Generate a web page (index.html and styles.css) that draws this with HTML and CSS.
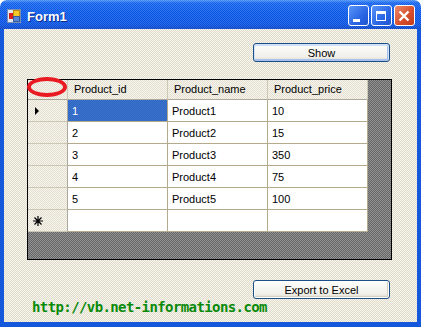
FILE: index.html
```html
<!DOCTYPE html>
<html lang="en">
  <head>
    <meta charset="UTF-8" />
    <title>Form1</title>
    <link rel="stylesheet" href="styles.css">
  </head>
  <body>
    <div class="window">
      <div class="titlebar">
        <svg class="app-icon" width="14" height="14" viewBox="0 0 14 14">
          <rect x="0.5" y="0.5" width="13" height="13" fill="#dfe6f2" stroke="#7d8fb0" />
          <rect x="6.5" y="1.5" width="6" height="6" fill="#f5c92a" stroke="#b88d12" />
          <rect x="6.5" y="7.5" width="6" height="5" fill="#5a86d8" stroke="#34599e" />
          <rect x="2" y="4" width="4" height="6" fill="#d91e1e" />
        </svg>
        <span class="title">Form1</span>
        <div class="caption-btns">
          <span class="cbtn">
            <svg width="19" height="19" viewBox="0 0 19 19"><rect x="4" y="13" width="7" height="3" fill="#fff" /></svg>
          </span>
          <span class="cbtn">
            <svg width="19" height="19" viewBox="0 0 19 19"><path d="M4 5h10v10H4z M5 8v6h8V8z" fill="#fff" fill-rule="evenodd" /></svg>
          </span>
          <span class="cbtn close">
            <svg width="19" height="19" viewBox="0 0 19 19"><path d="M4.5 5.5l9 9M13.5 5.5l-9 9" stroke="#fff" stroke-width="2.4" /></svg>
          </span>
        </div>
      </div>
      <div class="client">
        <button class="btn show">Show</button>
        <div class="dgv-wrap">
          <div class="dgv">
            <div class="hc corner"></div>
            <div class="hc">Product_id</div>
            <div class="hc">Product_name</div>
            <div class="hc">Product_price</div>

            <div class="rh"><span class="arrow"></span></div>
            <div class="c sel">1</div>
            <div class="c">Product1</div>
            <div class="c">10</div>

            <div class="rh"></div>
            <div class="c">2</div>
            <div class="c">Product2</div>
            <div class="c">15</div>

            <div class="rh"></div>
            <div class="c">3</div>
            <div class="c">Product3</div>
            <div class="c">350</div>

            <div class="rh"></div>
            <div class="c">4</div>
            <div class="c">Product4</div>
            <div class="c">75</div>

            <div class="rh"></div>
            <div class="c">5</div>
            <div class="c">Product5</div>
            <div class="c">100</div>

            <div class="rh">
              <svg class="star" width="10" height="10" viewBox="0 0 10 10"><path d="M5 0v10M0 5h10M1.5 1.5l7 7M8.5 1.5l-7 7" stroke="#000" stroke-width="1.2" /></svg>
            </div>
            <div class="c"></div>
            <div class="c"></div>
            <div class="c"></div>
          </div>
          <span class="mark"></span>
        </div>
        <button class="btn export">Export to Excel</button>
        <div class="url">http://vb.net-informations.com</div>
      </div>
    </div>
  </body>
</html>
```

FILE: styles.css
```css
* {
  margin: 0;
  padding: 0;
  box-sizing: border-box;
}
body {
  width: 421px;
  height: 327px;
  background: #fff;
  font-family: "Liberation Sans", Arial, sans-serif;
  font-size: 11px;
  overflow: hidden;
}
.window {
  width: 421px;
  height: 327px;
  display: flex;
  flex-direction: column;
}
.titlebar {
  height: 29px;
  display: flex;
  align-items: center;
  padding: 2px 6px 0 7px;
  border-radius: 7px 7px 0 0;
  background:
    repeating-conic-gradient(rgba(255, 255, 255, 0.16) 0 25%, transparent 0 50%) 0 0 / 2px 2px,
    linear-gradient(#4a94f6 0, #1462ec 3px, #0656e6 45%, #0650e0 85%, #0843c8 100%);
}
.app-icon {
  margin-top: 1px;
}
.title {
  flex: 1;
  margin: 2px 0 0 6px;
  color: #fff;
  font: bold 13px "Liberation Sans", Arial, sans-serif;
  text-shadow: 1px 1px #0b2a8a;
}
.caption-btns {
  display: flex;
  gap: 2px;
}
.cbtn {
  display: block;
  width: 21px;
  height: 21px;
  border: 1px solid #fff;
  border-radius: 3px;
  background: linear-gradient(135deg, #5a95f8, #2a66e4 60%, #1f55cf);
}
.cbtn svg {
  display: block;
}
.cbtn.close {
  background: linear-gradient(135deg, #ec8a6c, #d8502e 55%, #c23b1a);
}
.client {
  flex: 1;
  display: flex;
  flex-direction: column;
  border: solid #1558dc;
  border-width: 0 4px 5px 4px;
  background: repeating-conic-gradient(#f7f5ee 0 25%, #e0dccc 0 50%) 0 0 / 2px 2px;
}
.btn {
  align-self: flex-end;
  width: 137px;
  height: 19px;
  margin-right: 27px;
  border: 1px solid #1c4f86;
  border-radius: 3px;
  background: linear-gradient(#fdfdfb, #f1f0ea 75%, #dcd8cc);
  box-shadow: inset 0 0 0 1px #fff, inset -1px -1px 0 1px #d4d0c4;
  font: 11px "Liberation Sans", Arial, sans-serif;
  color: #000;
}
.show {
  margin-top: 14px;
  box-shadow: inset 0 1px 0 1px #cfe0fb, inset -1px -1px 0 1px #a8c0ec;
}
.export {
  margin-top: 20px;
}
.dgv-wrap {
  position: relative;
  width: 365px;
  height: 181px;
  margin: 17px 0 0 23px;
  border: 1px solid #000;
  background: repeating-conic-gradient(#666 0 25%, #929292 0 50%) 0 0 / 2px 2px;
}
.dgv {
  display: grid;
  grid-template-columns: 40px 100px 100px 100px;
  grid-template-rows: 20px repeat(6, 22px);
}
.hc {
  padding-left: 6px;
  line-height: 19px;
  white-space: nowrap;
  border-right: 1px solid #cbc7b4;
  border-bottom: 1px solid #aca899;
  background: repeating-conic-gradient(#f7f5ee 0 25%, #e3dfd0 0 50%) 0 0 / 2px 2px;
}
.rh {
  display: flex;
  align-items: center;
  padding-left: 5px;
  border-right: 1px solid #aca899;
  border-bottom: 1px solid #cbc7b4;
  background: repeating-conic-gradient(#f7f5ee 0 25%, #e3dfd0 0 50%) 0 0 / 2px 2px;
}
.arrow {
  margin-left: 2px;
  border-left: 4px solid #000;
  border-top: 4px solid transparent;
  border-bottom: 4px solid transparent;
}
.c {
  padding: 1px 0 0 4px;
  line-height: 20px;
  background: #fff;
  border-right: 1px solid #b3ab8c;
  border-bottom: 1px solid #b3ab8c;
}
.c.sel {
  background: repeating-conic-gradient(#2f66c2 0 25%, #3a74cf 0 50%) 0 0 / 2px 2px;
  color: #fff;
}
.mark {
  position: absolute;
  left: -1px;
  top: -3px;
  width: 40px;
  height: 20px;
  border: 4px solid #ea1a22;
  border-radius: 50%;
}
.url {
  margin: 0 0 0 28px;
  color: #0a8a0a;
  font: bold 14px/16px "DejaVu Sans Mono", monospace;
  letter-spacing: -0.6px;
}
```
